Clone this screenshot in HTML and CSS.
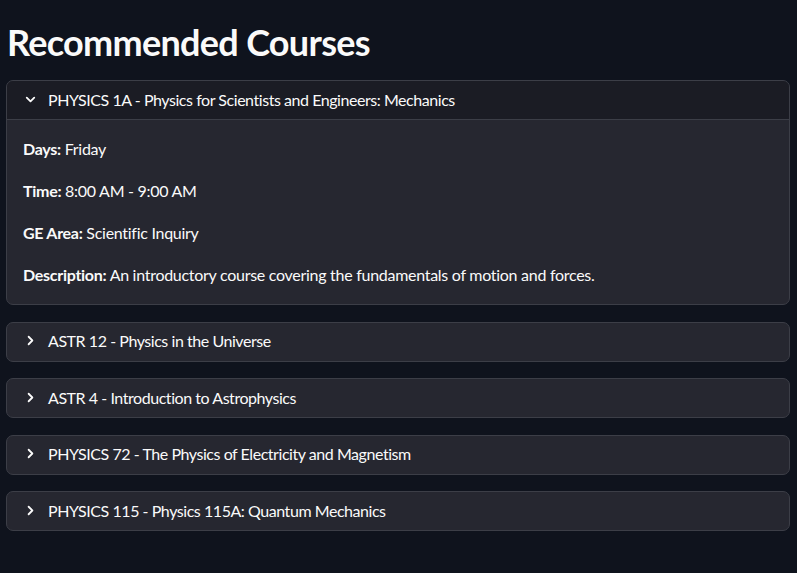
FILE: index.html
```html
<!DOCTYPE html>
<html>
<head>
<meta charset="utf-8">
<link rel="stylesheet" href="styles.css">
</head>
<body>
<main class="page">
  <h1 class="title">Recommended Courses</h1>
  <div class="list">
    <section class="exp open">
      <div class="exp-head">
        <svg class="chev" viewBox="0 0 16 16"><path d="M4 6l4 4 4-4"/></svg>
        <span>PHYSICS 1A - Physics for Scientists and Engineers: Mechanics</span>
      </div>
      <div class="exp-body">
        <p><b>Days:</b> Friday</p>
        <p><b>Time:</b> 8:00 AM - 9:00 AM</p>
        <p><b>GE Area:</b> Scientific Inquiry</p>
        <p><b>Description:</b> An introductory course covering the fundamentals of motion and forces.</p>
      </div>
    </section>
    <section class="exp">
      <div class="exp-head">
        <svg class="chev" viewBox="0 0 16 16"><path d="M6 4l4 4-4 4"/></svg>
        <span>ASTR 12 - Physics in the Universe</span>
      </div>
    </section>
    <section class="exp">
      <div class="exp-head">
        <svg class="chev" viewBox="0 0 16 16"><path d="M6 4l4 4-4 4"/></svg>
        <span>ASTR 4 - Introduction to Astrophysics</span>
      </div>
    </section>
    <section class="exp">
      <div class="exp-head">
        <svg class="chev" viewBox="0 0 16 16"><path d="M6 4l4 4-4 4"/></svg>
        <span>PHYSICS 72 - The Physics of Electricity and Magnetism</span>
      </div>
    </section>
    <section class="exp">
      <div class="exp-head">
        <svg class="chev" viewBox="0 0 16 16"><path d="M6 4l4 4-4 4"/></svg>
        <span>PHYSICS 115 - Physics 115A: Quantum Mechanics</span>
      </div>
    </section>
  </div>
</main>
</body>
</html>
```
FILE: styles.css
```css
html, body {
  margin: 0;
  padding: 0;
  background: #0f131d;
  color: #fafafa;
  font-family: "Lato", "Liberation Sans", sans-serif;
}
.page {
  padding: 20px 7px 0 6px;
}
.title {
  margin: 0 0 0 1px;
  font-size: 36px;
  font-weight: 700;
  line-height: 44px;
  letter-spacing: -0.7px;
}
.list {
  margin-top: 16px;
  display: flex;
  flex-direction: column;
  gap: 16.6px;
}
.exp {
  border: 1px solid #3c3e47;
  border-radius: 7px;
  background: #262730;
  overflow: hidden;
}
.exp-head {
  height: 38px;
  box-sizing: border-box;
  padding: 0 0 2px 16px;
  display: flex;
  align-items: center;
  font-size: 16px;
  letter-spacing: -0.45px;
}
.open .exp-head {
  height: 39px;
  background: #1b1c24;
  border-bottom: 1px solid #3c3e47;
}
.chev {
  width: 15px;
  height: 15px;
  margin-right: 10px;
  fill: none;
  stroke: #fafafa;
  stroke-width: 1.9;
  stroke-linecap: round;
  stroke-linejoin: round;
}
.exp-body {
  padding: 18px 16px 10px;
  font-size: 16px;
  letter-spacing: -0.28px;
}
.exp-body p {
  margin: 0 0 21px;
  line-height: 21px;
}
.exp-body p:last-child {
  margin-bottom: 9px;
}
```
